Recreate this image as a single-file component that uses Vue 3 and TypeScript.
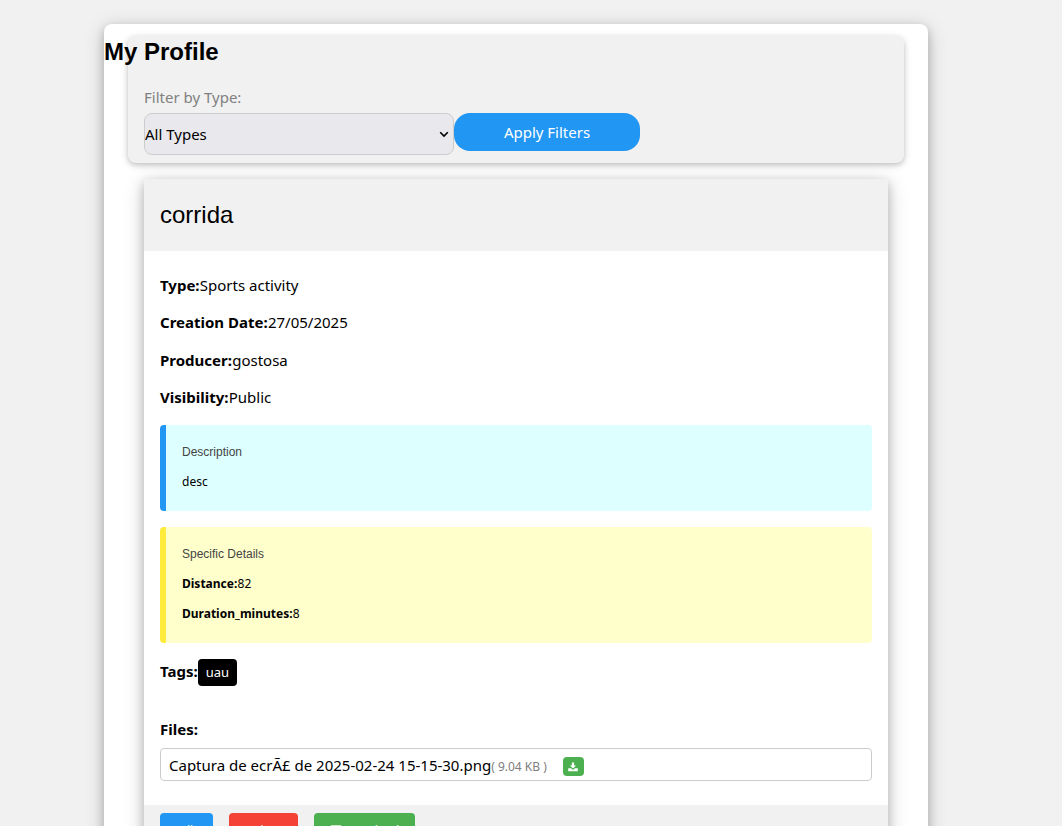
<script setup lang="ts">
import { ref } from 'vue'

interface Detail {
  label: string
  value: string
}

const selected = ref('')
const facts: Detail[] = [
  { label: 'Type:', value: 'Sports activity' },
  { label: 'Creation Date:', value: '27/05/2025' },
  { label: 'Producer:', value: 'gostosa' },
  { label: 'Visibility:', value: 'Public' },
]
const specifics: Detail[] = [
  { label: 'Distance:', value: '82' },
  { label: 'Duration_minutes:', value: '8' },
]
const tags: string[] = ['uau']
</script>

<template>
  <div class="viewport">
    <main class="profile">
      <h3 class="page-title">My Profile</h3>
      <section class="filters">
        <label class="filter-label" for="type">Filter by Type:</label>
        <div class="filter-row">
          <div class="select-wrap">
            <select id="type" v-model="selected" class="type-select">
              <option value="">All Types</option>
            </select>
            <svg class="chevron" width="10" height="7" viewBox="0 0 10 7">
              <path d="M1.2 1.2L5 5l3.8-3.8" fill="none" stroke="#000" stroke-width="1.6" />
            </svg>
          </div>
          <button class="apply" type="button">Apply Filters</button>
        </div>
      </section>

      <article class="card">
        <header class="card-header"><h3>corrida</h3></header>
        <div class="card-body">
          <p v-for="f in facts" :key="f.label"><b>{{ f.label }}</b>{{ f.value }}</p>

          <div class="panel description">
            <h6>Description</h6>
            <p>desc</p>
          </div>
          <div class="panel specifics">
            <h6>Specific Details</h6>
            <p v-for="s in specifics" :key="s.label"><b>{{ s.label }}</b>{{ s.value }}</p>
          </div>

          <div class="tags">
            <b>Tags:</b><span v-for="t in tags" :key="t" class="tag">{{ t }}</span>
          </div>

          <div class="files">
            <b class="files-label">Files:</b>
            <div class="file">
              <span>Captura de ecrÃ£ de 2025-02-24 15-15-30.png</span>
              <span class="size">( 9.04 KB )</span>
              <button class="download-mini" type="button" aria-label="Download file">
                <svg width="10" height="10" viewBox="0 0 10 10">
                  <path d="M3.9 0.6h2.2v3h2L5 6.6 1.9 3.6h2z" fill="#fff" />
                  <path d="M0.2 6.3h2.9L5 7.9l1.9-1.6h2.9v2.9H0.2z" fill="#fff" />
                </svg>
              </button>
            </div>
          </div>
        </div>
        <footer class="card-footer">
          <button class="btn blue" type="button">Edit</button>
          <button class="btn red" type="button">Delete</button>
          <button class="btn green" type="button">
            <svg width="12" height="10" viewBox="0 0 12 10">
              <rect x="0.5" y="0.5" width="11" height="9" rx="1" fill="none" stroke="#fff" stroke-opacity="0.7" />
            </svg>Download
          </button>
        </footer>
      </article>
    </main>
  </div>
</template>

<style>
body {
  margin: 0;
  background: #f1f1f1;
}
</style>

<style scoped>
* {
  box-sizing: border-box;
}
.viewport {
  height: 826px;
  padding: 24px 134px 0 104px;
  overflow: hidden;
  font: 15px/1.5 "Noto Sans", sans-serif;
  color: #000;
}
.profile {
  height: 900px;
  padding-top: 12px;
  background: #fff;
  border-radius: 8px;
  box-shadow: 0 4px 10px rgba(0, 0, 0, 0.2), 0 4px 20px rgba(0, 0, 0, 0.19);
}
h3,
h6 {
  margin: 10px 0;
  font-family: "Liberation Sans", Arial, sans-serif;
  font-weight: 400;
}
h3 {
  font-size: 24px;
}
.page-title {
  position: absolute;
  top: 24px;
  margin: 10px 0;
  font-weight: 700;
}
.filters {
  height: 127px;
  margin: 0 24px 16px;
  padding: 50px 16px 0;
  background: #f1f1f1;
  border-radius: 8px;
  box-shadow: 0 2px 5px rgba(0, 0, 0, 0.16), 0 2px 10px rgba(0, 0, 0, 0.12);
}
.filter-label {
  display: block;
  height: 27px;
  color: #808080;
}
.filter-row {
  display: flex;
  align-items: flex-start;
}
.select-wrap {
  position: relative;
  width: 310px;
  height: 42px;
}
.type-select {
  display: block;
  width: 100%;
  height: 100%;
  padding: 8px 0;
  appearance: none;
  font: inherit;
  color: #000;
  background: #e9e9ed;
  border: 1px solid #ccc;
  border-radius: 8px;
}
.chevron {
  position: absolute;
  top: 18px;
  right: 5px;
  pointer-events: none;
}
.apply {
  width: 186px;
  height: 38px;
  padding: 0;
  font: inherit;
  color: #fff;
  background: #2196f3;
  border: 0;
  border-radius: 16px;
}
.card {
  margin: 0 40px;
  background: #fff;
  box-shadow: 0 4px 10px rgba(0, 0, 0, 0.2), 0 4px 20px rgba(0, 0, 0, 0.19);
}
.card-header {
  height: 72px;
  padding: 8px 16px;
  display: flow-root;
  background: #f1f1f1;
}
.card-body {
  display: flow-root;
  height: 554px;
  padding: 7.8px 16px 8px;
}
.card-body p {
  margin: 15px 0;
}
.card-body p b {
  margin-right: 0.25px;
}
.panel {
  display: flow-root;
  padding: 1px 16px;
  margin: 16px 0;
  font-size: 12px;
  border-left: 6px solid;
  border-radius: 4px;
}
.panel h6 {
  margin: 17px 0 12px;
  line-height: 18px;
  font-size: 12px;
  color: #444;
}
.card-body .panel p {
  margin: 12px 0;
}
.description {
  height: 86px;
  margin-top: 16.2px;
  background: #ddffff;
  border-color: #2196f3;
}
.specifics {
  height: 116px;
  background: #ffffcc;
  border-color: #ffeb3b;
}
.tags {
  display: flex;
  height: 27px;
  align-items: flex-start;
}
.tags b {
  line-height: 25px;
}
.tag {
  padding: 0 8px;
  height: 27px;
  line-height: 27px;
  font-size: 13px;
  color: #fff;
  background: #000;
  border-radius: 4px;
}
.files {
  margin-top: 32px;
}
.files-label {
  display: block;
  height: 30px;
}
.file {
  display: flex;
  align-items: center;
  height: 33px;
  padding: 2px 8px 0;
  border: 1px solid #ccc;
  border-radius: 4px;
}
.size {
  padding-top: 3px;
  font-size: 12px;
  color: #808080;
}
.download-mini {
  display: flex;
  align-items: center;
  justify-content: center;
  width: 21px;
  height: 19px;
  margin: 3px 0 0 16px;
  padding: 0;
  background: #4caf50;
  border: 0;
  border-radius: 4px;
}
.card-footer {
  display: flex;
  gap: 16px;
  height: 60px;
  padding: 8px 16px;
  background: #f1f1f1;
}
.btn {
  display: flex;
  align-items: flex-start;
  height: 34px;
  padding: 9px 16px 0;
  font: inherit;
  font-size: 12px;
  color: #fff;
  white-space: nowrap;
  border: 0;
  border-radius: 4px;
}
.btn svg {
  flex: none;
  margin-top: 3px;
}
.blue {
  width: 53px;
  background: #2196f3;
}
.red {
  width: 69px;
  background: #f44336;
}
.green {
  width: 101px;
  background: #4caf50;
}
</style>
